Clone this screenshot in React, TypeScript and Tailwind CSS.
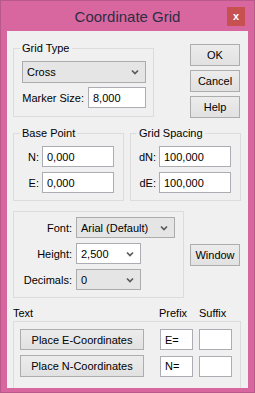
import React from 'react'

const Chevron = () => (
  <svg width="8" height="6" viewBox="0 0 8 6" className="shrink-0">
    <path d="M1 1.5 L4 4.5 L7 1.5" fill="none" stroke="#5a5a5a" strokeWidth="1.7" />
  </svg>
)

const Select = ({ value, className = '', white = false }: { value: string; className?: string; white?: boolean }) => (
  <div
    className={`flex items-center justify-between border pl-[4px] pr-[6px] ${
      white ? 'bg-white border-[#abadb3]' : 'bg-[#e5e5e5] border-[#acacac]'
    } ${className}`}
  >
    <span>{value}</span>
    <Chevron />
  </div>
)

const Input = ({ value = '', className = '' }: { value?: string; className?: string }) => (
  <div className={`flex items-center border border-[#abadb3] bg-white pl-[4px] ${className}`}>{value}</div>
)

const Button = ({ label, className = '' }: { label: string; className?: string }) => (
  <div
    className={`flex items-center justify-center border border-[#adadad] bg-gradient-to-b from-[#ececec] to-[#e1e1e1] ${className}`}
  >
    {label}
  </div>
)

const Group = ({ label, className = '', children }: { label?: string; className?: string; children?: React.ReactNode }) => (
  <div className={`relative border border-[#dcdcdc] ${className}`}>
    {label && (
      <span className="absolute -top-[8px] left-[6px] bg-[#f0f0f0] px-[2px] leading-[14px]">{label}</span>
    )}
    {children}
  </div>
)

const Field = ({ label, value }: { label: string; value: string }) => (
  <div className="flex items-center justify-end gap-[3px] pr-[9px]">
    <span>{label}</span>
    <Input value={value} className="w-[72px] h-[21px]" />
  </div>
)

export default function App() {
  return (
    <div className="w-[255px] h-[393px] border border-[#b9588a] bg-[#d8679f] flex flex-col font-['Liberation_Sans',Arial,sans-serif] text-[11px] text-black leading-[14px] overflow-hidden">
      {/* title bar */}
      <div className="relative h-[30px] shrink-0 flex items-center justify-center">
        <span className="text-[15px] text-[#2e2d45] mt-[1px]">Coordinate Grid</span>
        <div className="absolute right-[9px] top-[6px] w-[18px] h-[19px] bg-[#c75050] flex items-center justify-center text-white font-bold text-[11px] leading-none">
          x
        </div>
      </div>

      {/* client */}
      <div className="ml-[6px] w-[241px] h-[357px] bg-[#f0f0f0] pl-[6px] overflow-hidden">
        <div className="flex items-start">
          <Group label="Grid Type" className="w-[141px] h-[69px] mt-[17px] pt-[12px] pl-[8px]">
            <Select value="Cross" className="w-[124px] h-[22px]" />
            <div className="flex items-center justify-end gap-[4px] w-[124px] mt-[4px]">
              <span>Marker Size:</span>
              <Input value="8,000" className="w-[58px] h-[21px]" />
            </div>
          </Group>
          <div className="ml-[36px] mt-[13px] flex flex-col gap-[4px]">
            <Button label="OK" className="w-[50px] h-[22px]" />
            <Button label="Cancel" className="w-[50px] h-[22px]" />
            <Button label="Help" className="w-[50px] h-[22px]" />
          </div>
        </div>

        <div className="flex gap-[6px] mt-[15px]">
          <Group label="Base Point" className="w-[111px] h-[68px] pt-[12px]">
            <Field label="N:" value="0,000" />
            <div className="mt-[5px]">
              <Field label="E:" value="0,000" />
            </div>
          </Group>
          <Group label="Grid Spacing" className="w-[111px] h-[68px] pt-[12px]">
            <Field label="dN:" value="100,000" />
            <div className="mt-[5px]">
              <Field label="dE:" value="100,000" />
            </div>
          </Group>
        </div>

        <div className="flex items-start mt-[10px]">
          <Group className="w-[171px] h-[87px] pt-[5px] flex flex-col gap-[5px]">
            <div className="flex items-center">
              <span className="w-[58px] mr-[4px] text-right">Font:</span>
              <Select value="Arial (Default)" className="w-[99px] h-[21px]" />
            </div>
            <div className="flex items-center">
              <span className="w-[58px] mr-[4px] text-right">Height:</span>
              <Select value="2,500" white className="w-[65px] h-[21px]" />
            </div>
            <div className="flex items-center">
              <span className="w-[58px] mr-[4px] text-right">Decimals:</span>
              <Select value="0" className="w-[65px] h-[21px]" />
            </div>
          </Group>
          <Button label="Window" className="w-[50px] h-[22px] ml-[6px] mt-[33px]" />
        </div>

        <div className="flex items-center h-[16px] mt-[7px]">
          <span className="w-[146px]">Text</span>
          <span className="w-[40px]">Prefix</span>
          <span>Suffix</span>
        </div>

        <Group className="w-[228px] h-[80px] pt-[7px] pl-[6px] flex flex-col gap-[5px]">
          <div className="flex items-center">
            <Button label="Place E-Coordinates" className="w-[124px] h-[21px]" />
            <Input value="E=" className="w-[33px] h-[21px] ml-[16px]" />
            <Input className="w-[33px] h-[21px] ml-[6px]" />
          </div>
          <div className="flex items-center">
            <Button label="Place N-Coordinates" className="w-[124px] h-[22px]" />
            <Input value="N=" className="w-[33px] h-[21px] ml-[16px]" />
            <Input className="w-[33px] h-[21px] ml-[6px]" />
          </div>
        </Group>
      </div>
    </div>
  )
}
